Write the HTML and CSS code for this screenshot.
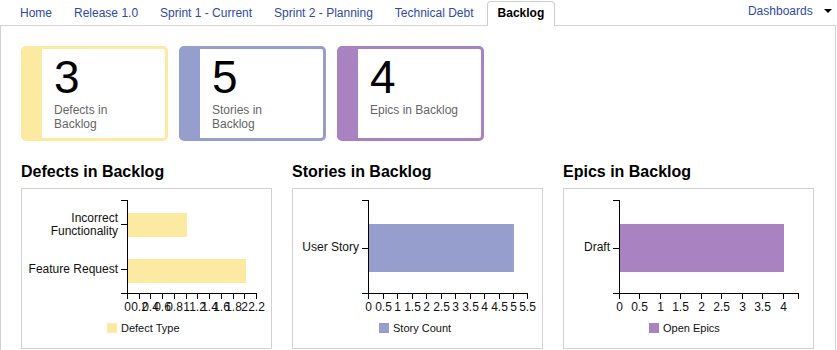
FILE: index.html
```html
<!DOCTYPE html>
<html>
	<head>
		<meta charset="utf-8" />
		<title>Backlog</title>
		<link rel="stylesheet" href="styles.css">
	</head>
	<body>
		<div class="topbar">
			<ul class="tabs">
				<li><a href="#">Home</a></li>
				<li><a href="#">Release 1.0</a></li>
				<li><a href="#">Sprint 1 - Current</a></li>
				<li><a href="#">Sprint 2 - Planning</a></li>
				<li><a href="#">Technical Debt</a></li>
				<li class="active"><a href="#">Backlog</a></li>
			</ul>
			<a class="dashboards" href="#">Dashboards <span class="caret"></span></a>
		</div>

		<div class="panel">
			<div class="cards">
				<div class="card yellow">
					<div class="count">3</div>
					<div class="label">Defects in Backlog</div>
				</div>
				<div class="card blue">
					<div class="count">5</div>
					<div class="label">Stories in Backlog</div>
				</div>
				<div class="card purple">
					<div class="count">4</div>
					<div class="label">Epics in Backlog</div>
				</div>
			</div>

			<div class="charts">
				<div class="chart">
					<h2>Defects in Backlog</h2>
					<div class="box">
						<svg width="249" height="159">
							<rect class="bar yellow" x="106" y="24" width="59" height="24" />
							<rect class="bar yellow" x="106" y="70" width="118" height="24" />
							<g class="axis">
								<line x1="105.5" y1="11" x2="105.5" y2="105" />
								<line x1="99" y1="11.5" x2="105" y2="11.5" />
								<line x1="99" y1="35.5" x2="105" y2="35.5" />
								<line x1="99" y1="80.5" x2="105" y2="80.5" />
								<line x1="99" y1="104.5" x2="235" y2="104.5" />
								<line x1="105.5" y1="104" x2="105.5" y2="110" />
								<line x1="117.5" y1="104" x2="117.5" y2="110" />
								<line x1="128.5" y1="104" x2="128.5" y2="110" />
								<line x1="140.5" y1="104" x2="140.5" y2="110" />
								<line x1="152.5" y1="104" x2="152.5" y2="110" />
								<line x1="164.5" y1="104" x2="164.5" y2="110" />
								<line x1="175.5" y1="104" x2="175.5" y2="110" />
								<line x1="187.5" y1="104" x2="187.5" y2="110" />
								<line x1="199.5" y1="104" x2="199.5" y2="110" />
								<line x1="211.5" y1="104" x2="211.5" y2="110" />
								<line x1="222.5" y1="104" x2="222.5" y2="110" />
								<line x1="234.5" y1="104" x2="234.5" y2="110" />
							</g>
							<g class="ylabels">
								<text x="96" y="33">Incorrect</text>
								<text x="96" y="46">Functionality</text>
								<text x="96" y="84">Feature Request</text>
							</g>
							<g class="xlabels">
								<text x="105.5" y="122">0</text>
								<text x="117.5" y="122">0.2</text>
								<text x="128.5" y="122">0.4</text>
								<text x="140.5" y="122">0.6</text>
								<text x="152.5" y="122">0.8</text>
								<text x="164.5" y="122">1</text>
								<text x="175.5" y="122">1.2</text>
								<text x="187.5" y="122">1.4</text>
								<text x="199.5" y="122">1.6</text>
								<text x="211.5" y="122">1.8</text>
								<text x="222.5" y="122">2</text>
								<text x="234.5" y="122">2.2</text>
							</g>
							<rect class="bar yellow" x="85" y="134" width="10" height="10" />
							<text class="legend" x="99" y="143">Defect Type</text>
						</svg>
					</div>
				</div>

				<div class="chart">
					<h2>Stories in Backlog</h2>
					<div class="box">
						<svg width="249" height="159">
							<rect class="bar blue" x="76" y="35" width="145" height="48" />
							<g class="axis">
								<line x1="75.5" y1="11" x2="75.5" y2="105" />
								<line x1="69" y1="11.5" x2="75" y2="11.5" />
								<line x1="69" y1="59.5" x2="75" y2="59.5" />
								<line x1="69" y1="104.5" x2="235" y2="104.5" />
								<line x1="75.5" y1="104" x2="75.5" y2="110" />
								<line x1="90.5" y1="104" x2="90.5" y2="110" />
								<line x1="104.5" y1="104" x2="104.5" y2="110" />
								<line x1="119.5" y1="104" x2="119.5" y2="110" />
								<line x1="133.5" y1="104" x2="133.5" y2="110" />
								<line x1="148.5" y1="104" x2="148.5" y2="110" />
								<line x1="162.5" y1="104" x2="162.5" y2="110" />
								<line x1="177.5" y1="104" x2="177.5" y2="110" />
								<line x1="191.5" y1="104" x2="191.5" y2="110" />
								<line x1="206.5" y1="104" x2="206.5" y2="110" />
								<line x1="220.5" y1="104" x2="220.5" y2="110" />
								<line x1="234.5" y1="104" x2="234.5" y2="110" />
							</g>
							<g class="ylabels">
								<text x="66" y="62">User Story</text>
							</g>
							<g class="xlabels">
								<text x="75.5" y="122">0</text>
								<text x="90.5" y="122">0.5</text>
								<text x="104.5" y="122">1</text>
								<text x="119.5" y="122">1.5</text>
								<text x="133.5" y="122">2</text>
								<text x="148.5" y="122">2.5</text>
								<text x="162.5" y="122">3</text>
								<text x="177.5" y="122">3.5</text>
								<text x="191.5" y="122">4</text>
								<text x="206.5" y="122">4.5</text>
								<text x="220.5" y="122">5</text>
								<text x="234.5" y="122">5.5</text>
							</g>
							<rect class="bar blue" x="86" y="134" width="10" height="10" />
							<text class="legend" x="100" y="143">Story Count</text>
						</svg>
					</div>
				</div>

				<div class="chart">
					<h2>Epics in Backlog</h2>
					<div class="box">
						<svg width="249" height="159">
							<rect class="bar purple" x="56" y="35" width="164" height="48" />
							<g class="axis">
								<line x1="55.5" y1="11" x2="55.5" y2="105" />
								<line x1="49" y1="11.5" x2="55" y2="11.5" />
								<line x1="49" y1="59.5" x2="55" y2="59.5" />
								<line x1="49" y1="104.5" x2="235" y2="104.5" />
								<line x1="55.5" y1="104" x2="55.5" y2="110" />
								<line x1="75.5" y1="104" x2="75.5" y2="110" />
								<line x1="96.5" y1="104" x2="96.5" y2="110" />
								<line x1="116.5" y1="104" x2="116.5" y2="110" />
								<line x1="137.5" y1="104" x2="137.5" y2="110" />
								<line x1="157.5" y1="104" x2="157.5" y2="110" />
								<line x1="178.5" y1="104" x2="178.5" y2="110" />
								<line x1="198.5" y1="104" x2="198.5" y2="110" />
								<line x1="219.5" y1="104" x2="219.5" y2="110" />
								<line x1="234.5" y1="104" x2="234.5" y2="110" />
							</g>
							<g class="ylabels">
								<text x="46" y="62">Draft</text>
							</g>
							<g class="xlabels">
								<text x="55.5" y="122">0</text>
								<text x="75.5" y="122">0.5</text>
								<text x="96.5" y="122">1</text>
								<text x="116.5" y="122">1.5</text>
								<text x="137.5" y="122">2</text>
								<text x="157.5" y="122">2.5</text>
								<text x="178.5" y="122">3</text>
								<text x="198.5" y="122">3.5</text>
								<text x="219.5" y="122">4</text>
							</g>
							<rect class="bar purple" x="85" y="134" width="10" height="10" />
							<text class="legend" x="99" y="143">Open Epics</text>
						</svg>
					</div>
				</div>
			</div>
		</div>
	</body>
</html>
```

FILE: styles.css
```css
body {
	margin:0;
	font-family:"Liberation Sans", Arial, sans-serif;
	background:#fff;
	color:#000;
}
a {
	text-decoration:none;
	color:#3049a8;
}

/* tab strip */
.topbar {
	display:flex;
	justify-content:space-between;
	height:25px;
}
.tabs {
	display:flex;
	align-items:flex-end;
	list-style:none;
	margin:0;
	padding:0 0 0 9px;
	font-size:12px;
}
.tabs a {
	display:block;
	padding:0 11px;
	line-height:24px;
}
.tabs .active {
	position:relative;
	z-index:1;
	margin-left:2px;
	margin-bottom:-1px;
}
.tabs .active a {
	padding:0 10px 1px;
	line-height:23px;
	border:1px solid #cfcfcf;
	border-bottom:0;
	border-radius:4px 4px 0 0;
	background:#fff;
	color:#000;
	font-weight:bold;
}
.dashboards {
	font-size:12px;
	line-height:23px;
	margin-right:5px;
}
.caret {
	display:inline-block;
	width:0;
	height:0;
	margin-left:8px;
	vertical-align:2px;
	border-left:4px solid transparent;
	border-right:4px solid transparent;
	border-top:4px solid #000;
}

/* content panel */
.panel {
	margin-right:1px;
	border:1px solid #d2d2d2;
	padding:20px 20px 20px;
	min-height:300px;
}
.cards {
	display:flex;
	gap:11px;
}
.card {
	width:147px;
	height:95px;
	box-sizing:border-box;
	border:3px solid;
	border-left-width:21px;
	border-radius:5px;
	padding:5px 0 0 12px;
}
.card.yellow { border-color:#fce9a2; }
.card.blue { border-color:#969ece; }
.card.purple { border-color:#a983c1; }
.count {
	font-size:46px;
	line-height:46px;
}
.label {
	width:94px;
	margin-top:3px;
	font-size:12px;
	line-height:14px;
	color:#666;
}

/* charts */
.charts {
	display:flex;
	gap:20px;
	margin-top:20px;
}
.chart h2 {
	margin:0 0 6px;
	font-size:16px;
	line-height:21px;
}
.box {
	width:249px;
	height:159px;
	border:1px solid #d2d2d2;
}
.box svg {
	display:block;
}
.axis line {
	stroke:#000;
	stroke-width:1;
	shape-rendering:crispEdges;
}
.bar.yellow { fill:#fce9a2; }
.bar.blue { fill:#969ece; }
.bar.purple { fill:#a983c1; }
svg text {
	font-family:"Liberation Sans", Arial, sans-serif;
	font-size:12px;
	fill:#111;
}
.ylabels text {
	text-anchor:end;
}
.xlabels text {
	text-anchor:middle;
}
svg .legend {
	font-size:11px;
}
```
